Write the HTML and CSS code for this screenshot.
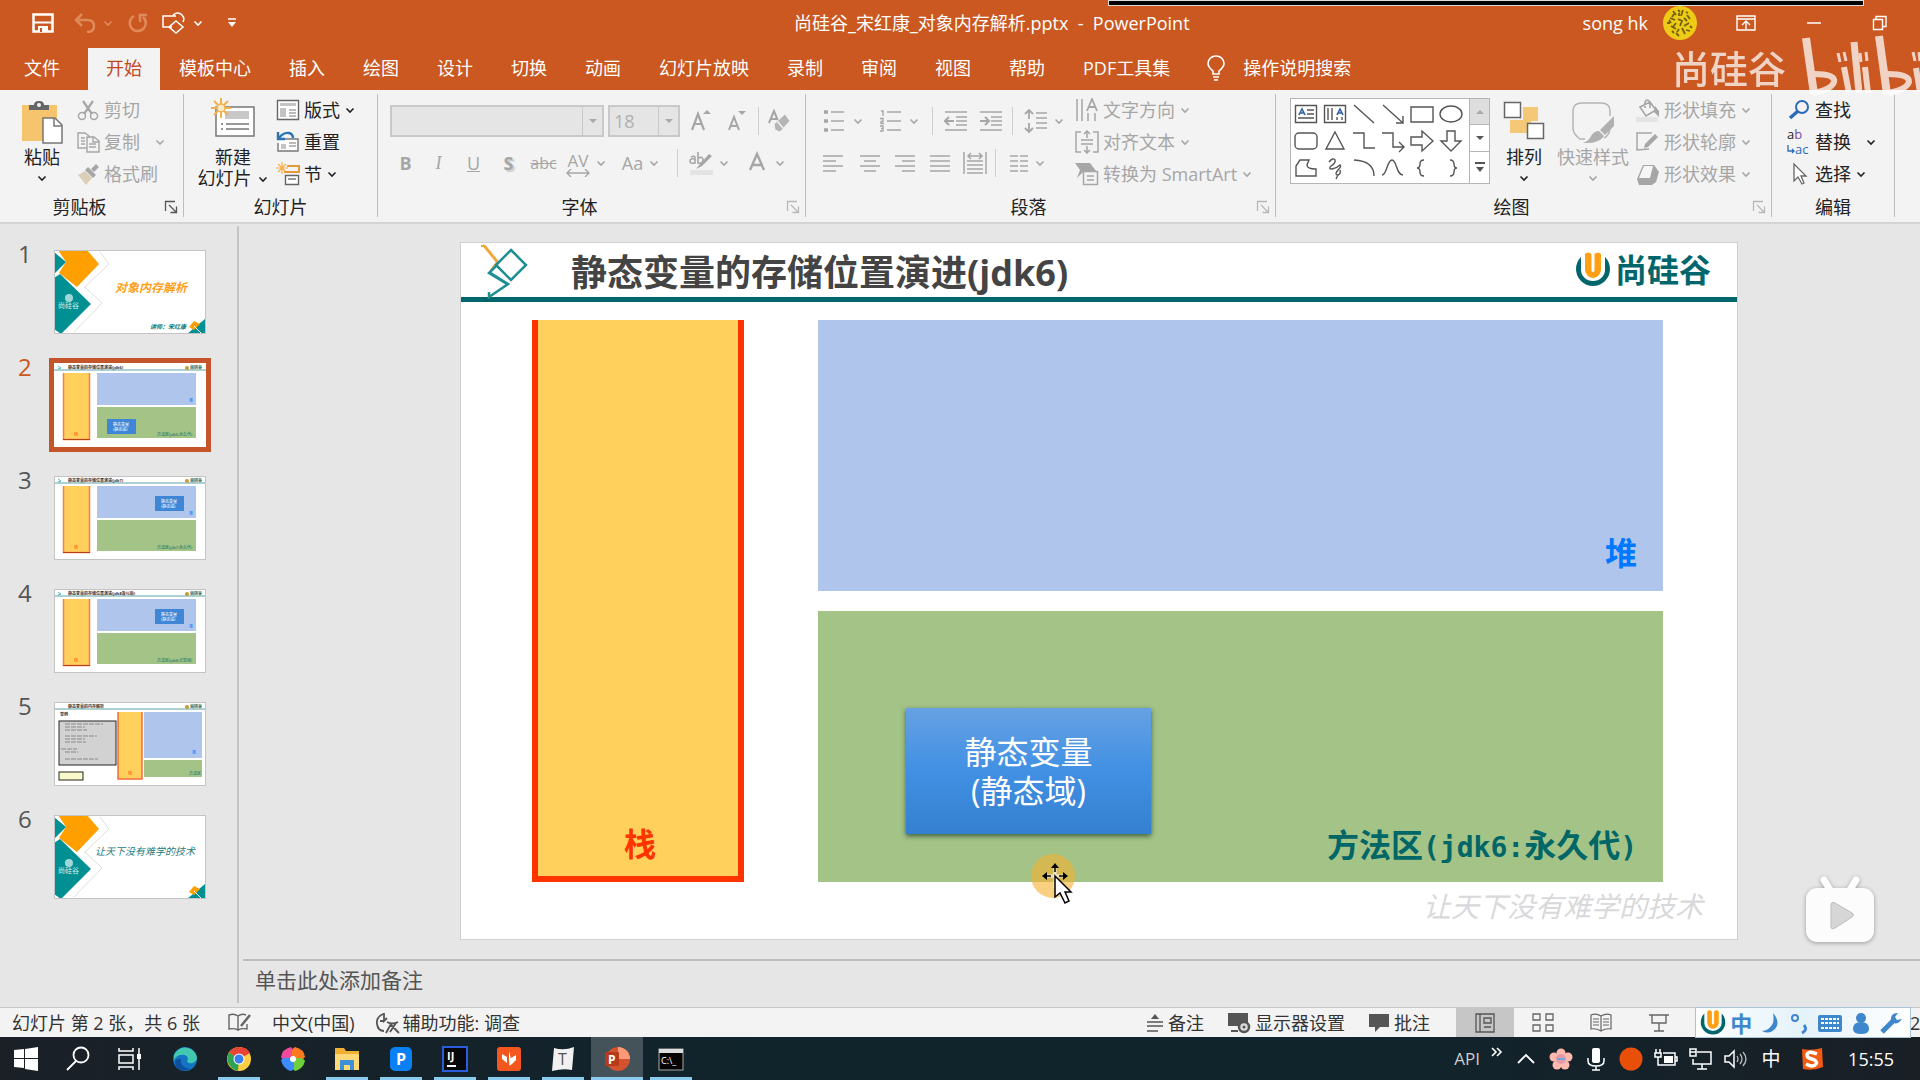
FILE: index.html
```html
<!DOCTYPE html>
<html lang="zh-CN">
<head>
<meta charset="utf-8">
<title>尚硅谷_宋红康_对象内存解析.pptx - PowerPoint</title>
<link rel="stylesheet" href="styles.css">
</head>
<body>
<svg class="sprite" aria-hidden="true">
  <symbol id="chev" viewBox="0 0 12 12"><path d="M2.500 4.500 6 8 9.500 4.500" fill="none" stroke="currentColor" stroke-width="1.600"/></symbol>
  <symbol id="launch" viewBox="0 0 14 14"><path d="M1.500 11V1.500H11M5 5l7 7M12.500 6.500v6h-6" fill="none" stroke="currentColor" stroke-width="1.300"/></symbol>
  <symbol id="u-logo" viewBox="0 0 36 36"><path d="M6 5A17 17 0 1 0 30 5v13a12 11 0 0 1-24 0z" fill="#00666b"/><path d="M10 2q3-3 6.500 0v17q1.500 2 3 0V2q3.500-3 6.500 0v16q-1 7-8 8-7-1-8-8z" fill="#ffa014"/></symbol>
  <symbol id="cover" viewBox="0 0 152 84"><rect width="152" height="84" fill="#fff"/><path d="M46 2l9 12-25 24M31 37l17 16-28 29" fill="none" stroke="#e0dfd6"/><path d="M4 0h29l12 14-22 23L5 23l7-11z" fill="#ffa000"/><path d="M0 2l12 10L0 24zM0 28l6-4 31 30L7 84l-7-5z" fill="#008f92"/><circle cx="15" cy="48" r="4" fill="#9fd8da"/><path d="M151 69v15h-18z" fill="#008f92"/><path d="M135 77l5-6 6 3-6 6z" fill="#ffa000"/><path d="M140 76l8 8" stroke="#fff"/></symbol>
  <symbol id="memory" viewBox="0 0 152 84"><rect width="152" height="84" fill="#fff"/><path d="M4 3l3 2-3 1" fill="none" stroke="#5bb"/><path d="M0 7h152" stroke="#5aa3a5"/><circle cx="133" cy="5" r="2" fill="#c59a39"/><text x="136" y="6" font-size="4" font-weight="bold" fill="#066">尚硅谷</text><rect x="9" y="10" width="26" height="66" fill="#ffd15c"/><path d="M9.500 10v66.500h26V10" fill="none" stroke="#f97d4a" stroke-width="1.500"/><path d="M9 76.500h27" stroke="#b5421c"/><rect x="43" y="10" width="99" height="32" fill="#afc5ec"/><rect x="43" y="44" width="99" height="31" fill="#a4c387"/></symbol>
</svg>

<div class="app">
  <header class="titlebar">
    <div class="quick">
      <button aria-label="保存"><svg width="22" height="20" viewBox="0 0 22 20"><path d="M1.500 1.500h19v17h-19z" fill="none" stroke="#fff" stroke-width="2.500"/><path d="M2 9.500h18" stroke="#fff" stroke-width="2"/><path d="M6 19v-6h10v6z" fill="#fff"/><path d="M8 15h2v4H8z" fill="#ca5820"/></svg></button>
      <button class="faded" aria-label="撤消"><svg width="22" height="20" viewBox="0 0 22 20"><path d="M8 1 2 7l6 6M2 7h11q7 0 7 6t-7 6" fill="none" stroke="currentColor" stroke-width="2.500"/></svg><svg class="chev"><use href="#chev"/></svg></button>
      <button class="faded" aria-label="重复"><svg width="20" height="20" viewBox="0 0 20 20"><path d="M6 3a8 8 0 1 0 9 1M12 9V2h7" fill="none" stroke="currentColor" stroke-width="2.500"/></svg></button>
      <button aria-label="形状"><svg width="24" height="22" viewBox="0 0 24 22"><path d="M10 15H1V4h13M11 3q5-4 9 0 3 3 1 7M14 9l7 6-7 6-7-6z" fill="none" stroke="#fff" stroke-width="1.500"/></svg><svg class="chev"><use href="#chev"/></svg></button>
      <button aria-label="自定义快速访问工具栏"><svg width="12" height="12" viewBox="0 0 12 12"><path d="M2 2h8" stroke="#fff" stroke-width="1.500"/><path d="M2 5h8L6 10z" fill="#fff"/></svg></button>
    </div>
    <h1 class="doc-title">尚硅谷_宋红康_对象内存解析.pptx &nbsp;- &nbsp;PowerPoint</h1>
    <div class="account">
      <span>song hk</span>
      <svg width="36" height="34" viewBox="0 0 36 34"><circle cx="18" cy="17" r="17" fill="#edcb16"/><path d="M11 5l3 4M21 4l-2 6M25 9l3 4M8 12l5 2M16 13l4 2-2 5M27 17l-5 3M9 20l5 3M20 22l3 6M14 27l3 3M24 24l4 1M5 17h3M17 7v3M14 17l-3 4M12 8l-2 3M22 12l3 3M17 23l-2 3M28 20l2 2M16 4l2 2M10 25l2 2M7 14l2 3M24 6l2 1" stroke="#74600a" stroke-width="1.800" fill="none"/></svg>
    </div>
    <div class="window-buttons">
      <button aria-label="功能区显示选项"><svg width="20" height="16" viewBox="0 0 20 16"><path d="M1 1h18v14H1zM1 4h18M10 14V7M6 10l4-4 4 4" fill="none" stroke="#fff" stroke-width="1.400"/></svg></button>
      <button aria-label="最小化"><svg width="16" height="16" viewBox="0 0 16 16"><path d="M1 8h14" stroke="#fff" stroke-width="1.500"/></svg></button>
      <button aria-label="向下还原"><svg width="16" height="16" viewBox="0 0 16 16"><path d="M1.500 4.500h9v10h-9zM4 4V1.500h10v10h-3" fill="none" stroke="#fff" stroke-width="1.400"/></svg></button>
    </div>
  </header>

  <nav class="tabs">
    <button class="file">文件</button>
    <button class="active">开始</button>
    <button>模板中心</button><button>插入</button><button>绘图</button><button>设计</button><button>切换</button><button>动画</button><button>幻灯片放映</button><button>录制</button><button>审阅</button><button>视图</button><button>帮助</button><button>PDF工具集</button>
    <label class="tell-me"><svg width="20" height="26" viewBox="0 0 20 26"><path d="M7 19v-3Q2 12 2 8.500a8 7.500 0 0 1 16 0Q18 12 13 16v3zM7 22h6M8 25h4" fill="none" stroke="#fff" stroke-width="1.600"/></svg><input type="text" placeholder="操作说明搜索"></label>
  </nav>

  <section class="ribbon">
    <div class="group g-clip">
      <div class="body">
        <button class="big w44"><svg width="44" height="46" viewBox="0 0 44 46"><path d="M2 7h35v36H2z" fill="#f5c46d"/><path d="M9 12V7h5q0-4 5-4t5 4h5v5z" fill="#666"/><circle cx="19" cy="7" r="2" fill="#f3f3f3"/><path d="M23 20h12l7 7v18H23z" fill="#fff" stroke="#777" stroke-width="1.500"/><path d="M34 20v8h8" fill="none" stroke="#777" stroke-width="1.500"/></svg><span>粘贴</span><svg class="chev"><use href="#chev"/></svg></button>
        <div class="stack">
          <button class="off"><svg viewBox="0 0 24 24"><path d="M7 3l9 13M17 3L8 16" fill="none" stroke="currentColor" stroke-width="2.200"/><circle cx="6" cy="18" r="3.500" fill="none" stroke="currentColor" stroke-width="1.500"/><circle cx="18" cy="18" r="3.500" fill="none" stroke="currentColor" stroke-width="1.500"/></svg>剪切</button>
          <button class="off wide"><svg viewBox="0 0 24 24"><path d="M11 18H2V3h7l4 3v2M11 7h7l5 4v11H11zM17 7v5h6M5 8h4M5 11h4M5 14h4M13 14h7M13 17h7" fill="none" stroke="currentColor" stroke-width="1.400"/></svg>复制<svg class="chev"><use href="#chev"/></svg></button>
          <button class="off"><svg viewBox="0 0 24 24"><path d="M2 13l7-4 7 7-6 7z" fill="#dccfb8"/><path d="M9 8l3-3 8 8-3 3zM15 7l5-5 3 3-5 5z" fill="currentColor"/></svg>格式刷</button>
        </div>
      </div>
      <footer><span>剪贴板</span><button aria-label="剪贴板选项"><svg width="14" height="14"><use href="#launch"/></svg></button></footer>
    </div>

    <div class="group g-slides">
      <div class="body">
        <button class="big w70"><svg width="44" height="46" viewBox="0 0 44 46"><path d="M5 9h38v29H5z" fill="#fff" stroke="#777" stroke-width="1.500"/><path d="M14 13h24v8H14z" fill="#c8c8c8"/><path d="M10 26h2M15 26h23M10 31h2M15 31h23" stroke="#777" stroke-width="1.500"/><path d="M10 0v20M0 10h20M3 3l14 14M17 3L3 17" stroke="#f2b14c" stroke-width="2"/><circle cx="10" cy="10" r="4" fill="#fbe9c8" stroke="#f2b14c" stroke-width="1.500"/></svg><span>新建</span><span class="with-chev">幻灯片<svg class="chev"><use href="#chev"/></svg></span></button>
        <div class="stack">
          <button><svg viewBox="0 0 24 24"><path d="M1.500 2.500h21v19h-21z" fill="#fff" stroke="#666" stroke-width="1.400"/><path d="M4 5h16v3H4zM4 10h6v9H4z" fill="#c4c4c4"/><path d="M13 12h7M13 15h7M13 18h7" stroke="#777"/></svg>版式<svg class="chev"><use href="#chev"/></svg></button>
          <button><svg viewBox="0 0 24 24"><path d="M5 9h17v12H2v-8" fill="#fff" stroke="#777" stroke-width="1.400"/><path d="M5 14h5v5H5z" fill="#c4c4c4"/><path d="M13 13h7M13 16h7" stroke="#777"/><path d="M2 2v7h7M2 9q5-7 11-6 4 1 4 5" fill="none" stroke="#2e74b5" stroke-width="2.400"/></svg>重置</button>
          <button><svg viewBox="0 0 24 24"><path d="M6 0v12M0 6h12M2 2l8 8M10 2l-8 8" stroke="#f2b14c" stroke-width="1.200"/><path d="M11 4h12v6H8" fill="none" stroke="#e59a3a" stroke-width="2"/><path d="M9.500 13.500h13v9h-13z" fill="#fff" stroke="#666" stroke-width="1.400"/><path d="M12 17h8" stroke="#999" stroke-width="2"/></svg>节<svg class="chev"><use href="#chev"/></svg></button>
        </div>
      </div>
      <footer><span>幻灯片</span></footer>
    </div>

    <div class="group g-font">
      <div class="body rows off">
        <div class="row font-row">
          <span class="combo name"><select aria-label="字体" disabled><option></option></select><i></i></span>
          <span class="combo size"><select aria-label="字号" disabled><option>18</option></select><i></i></span>
          <button aria-label="增大字号"><svg viewBox="0 0 24 24"><path d="M3 21 9 5l6 16M5 15h8" fill="none" stroke="currentColor" stroke-width="2.200"/><path d="M14 5l4-4 4 4z" fill="currentColor"/></svg></button>
          <button aria-label="减小字号"><svg viewBox="0 0 24 24"><path d="M4 21 9 8l5 13M6 17h6" fill="none" stroke="currentColor" stroke-width="2"/><path d="M13 2l4 4 4-4z" fill="currentColor"/></svg></button>
          <hr>
          <button aria-label="清除所有格式"><svg viewBox="0 0 24 24"><path d="M2 14 7 2l5 12M4 10h7" fill="none" stroke="currentColor" stroke-width="2"/><path d="M7 15 18 5l5 7-10 11-5-2z" fill="#b5b5b5" stroke="#f3f3f3"/><path d="M10 12l6 7" stroke="#f3f3f3" stroke-width="1.500"/></svg></button>
        </div>
        <div class="row style-row">
          <button><b>B</b></button><button><em>I</em></button><button><u>U</u></button><button><b class="shadowed">S</b></button><button><s>abc</s></button>
          <button aria-label="字符间距"><span class="av">AV<svg width="24" height="8" viewBox="0 0 24 8"><path d="M5 0 1 4l4 4M19 0l4 4-4 4M1 4h22" fill="none" stroke="currentColor" stroke-width="1.400"/></svg></span><svg class="chev"><use href="#chev"/></svg></button>
          <button>Aa<svg class="chev"><use href="#chev"/></svg></button>
          <hr>
          <button aria-label="突出显示"><svg viewBox="0 0 24 24"><path d="M1 19h23v5H1z" fill="#e3e3e3"/><path d="M2 6q4-2 4 1v5q-5 1-5-2t5-2M9 1v11q5 1 5-3t-5-2" fill="none" stroke="currentColor" stroke-width="1.600"/><path d="M20 3l3 2-10 10-6 3 4-5z" fill="currentColor"/></svg><svg class="chev"><use href="#chev"/></svg></button>
          <button aria-label="字体颜色"><svg viewBox="0 0 24 24"><path d="M5 19 12 3l7 16M8 14h8" fill="none" stroke="currentColor" stroke-width="2.400"/></svg><svg class="chev"><use href="#chev"/></svg></button>
        </div>
      </div>
      <footer class="off-launch"><span>字体</span><button aria-label="字体选项"><svg width="14" height="14"><use href="#launch"/></svg></button></footer>
    </div>

    <div class="group g-para">
      <div class="body off">
        <div class="rows">
          <div class="row list-row">
            <button aria-label="项目符号"><svg viewBox="0 0 24 24"><path d="M1 3h4M1 12h4M1 21h4" stroke="currentColor" stroke-width="3.500"/><path d="M8 3h13M8 12h13M8 21h13" stroke="currentColor" stroke-width="1.500"/></svg><svg class="chev"><use href="#chev"/></svg></button>
            <button aria-label="编号"><svg viewBox="0 0 24 24"><path d="M2 2h2v5M1 9.500h3v3H2v2h3M1 17h3v5H1M2 19.500h2" fill="none" stroke="currentColor" stroke-width="1.300"/><path d="M8 3h14M8 12h14M8 21h14" stroke="currentColor" stroke-width="1.500"/></svg><svg class="chev"><use href="#chev"/></svg></button>
            <hr>
            <button aria-label="降低列表级别"><svg viewBox="0 0 24 24"><path d="M1 3h22M12 8h11M12 12h11M12 16h11M1 21h22" stroke="currentColor" stroke-width="1.500"/><path d="M10 12H2M5 8l-4 4 4 4" fill="none" stroke="currentColor" stroke-width="2"/></svg></button>
            <button aria-label="提高列表级别"><svg viewBox="0 0 24 24"><path d="M1 3h22M12 8h11M12 12h11M12 16h11M1 21h22" stroke="currentColor" stroke-width="1.500"/><path d="M1 12h8M6 8l4 4-4 4" fill="none" stroke="currentColor" stroke-width="2"/></svg></button>
            <hr>
            <button aria-label="行距"><svg viewBox="0 0 24 24"><path d="M5 1v9M5 14v9M1 5l4-4 4 4M1 19l4 4 4-4" fill="none" stroke="currentColor" stroke-width="1.800"/><path d="M12 4h11M12 9h11M12 14h11M12 19h11" stroke="currentColor" stroke-width="1.500"/></svg><svg class="chev"><use href="#chev"/></svg></button>
          </div>
          <div class="row align-row">
            <button aria-label="左对齐"><svg viewBox="0 0 24 24"><path d="M2 5h20M2 10h13M2 15h20M2 20h13" stroke="currentColor" stroke-width="1.500"/></svg></button>
            <button aria-label="居中"><svg viewBox="0 0 24 24"><path d="M2 5h20M6 10h12M2 15h20M6 20h12" stroke="currentColor" stroke-width="1.500"/></svg></button>
            <button aria-label="右对齐"><svg viewBox="0 0 24 24"><path d="M2 5h20M9 10h13M2 15h20M9 20h13" stroke="currentColor" stroke-width="1.500"/></svg></button>
            <button aria-label="两端对齐"><svg viewBox="0 0 24 24"><path d="M2 5h20M2 10h20M2 15h20M2 20h20" stroke="currentColor" stroke-width="1.500"/></svg></button>
            <button aria-label="分散对齐"><svg viewBox="0 0 24 24"><path d="M1 1v22M23 1v22M4 10h16M4 14h16M4 18h16M4 22h16M5 5h14M8 2 5 5l3 3M16 2l3 3-3 3" fill="none" stroke="currentColor" stroke-width="1.500"/></svg></button>
            <hr>
            <button aria-label="分栏"><svg width="20" height="24" viewBox="0 0 20 24"><path d="M1 5h8M1 10h8M1 15h8M1 20h8M11 5h8M11 10h8M11 15h8M11 20h8" stroke="currentColor" stroke-width="1.500"/></svg><svg class="chev"><use href="#chev"/></svg></button>
          </div>
        </div>
        <div class="stack">
          <button><svg viewBox="0 0 24 24"><path d="M2 1v22M7 1v22M13 15v8M20 15v8" stroke="currentColor" stroke-width="1.500"/><path d="M12 13 17 1l5 12M14 9h6" fill="none" stroke="currentColor" stroke-width="1.800"/></svg>文字方向<svg class="chev"><use href="#chev"/></svg></button>
          <button><svg viewBox="0 0 24 24"><path d="M6 2H1v20h5M18 2h5v20h-5M6 10h12M6 14h12M12 1v7M12 23v-7M9 4l3-3 3 3M9 20l3 3 3-3" fill="none" stroke="currentColor" stroke-width="1.500"/></svg>对齐文本<svg class="chev"><use href="#chev"/></svg></button>
          <button><svg viewBox="0 0 24 24"><path d="M0 1h15l6 8H9l-7 7 3-8z" fill="currentColor"/><path d="M8.500 9.500h14v13h-14z" fill="#f3f3f3" stroke="currentColor" stroke-width="1.500"/><path d="M12 14h7M12 18h7" stroke="currentColor" stroke-width="1.500"/></svg>转换为 SmartArt<svg class="chev"><use href="#chev"/></svg></button>
        </div>
      </div>
      <footer class="off-launch"><span>段落</span><button aria-label="段落选项"><svg width="14" height="14"><use href="#launch"/></svg></button></footer>
    </div>

    <div class="group g-draw">
      <div class="body">
        <div class="gallery">
          <div class="shapes">
            <button aria-label="文本框"><svg viewBox="0 0 24 24"><path d="M1.500 3.500h21v17h-21zM13 8h7M13 12h7M4 16h16"/><path d="M5 13 8 7l3 6M6 11h4" stroke="#2f62a3" stroke-width="1.600"/></svg></button>
            <button aria-label="竖排文本框"><svg viewBox="0 0 24 24"><path d="M1.500 3.500h21v17h-21zM5 6v12M9 6v12M14 15v3M19 15v3"/><path d="M14 13l3-6 3 6M15 11h4" stroke="#2f62a3" stroke-width="1.600"/></svg></button>
            <button aria-label="直线"><svg viewBox="0 0 24 24"><path d="M2 3l20 18"/></svg></button>
            <button aria-label="箭头"><svg viewBox="0 0 24 24"><path d="M2 3l20 18M22 14v7h-7"/></svg></button>
            <button aria-label="矩形"><svg viewBox="0 0 24 24"><path d="M1 5h22v15H1z"/></svg></button>
            <button aria-label="椭圆"><svg viewBox="0 0 24 24"><ellipse cx="12" cy="12" rx="11" ry="8"/></svg></button>
            <button aria-label="圆角矩形"><svg viewBox="0 0 24 24"><rect x="1" y="4" width="22" height="16" rx="4"/></svg></button>
            <button aria-label="三角形"><svg viewBox="0 0 24 24"><path d="M12 3l9 17H3z"/></svg></button>
            <button aria-label="肘形连接符"><svg viewBox="0 0 24 24"><path d="M1 4h11v15h11"/></svg></button>
            <button aria-label="肘形箭头"><svg viewBox="0 0 24 24"><path d="M1 4h11v14h11M18 13l5 5-5 5"/></svg></button>
            <button aria-label="右箭头"><svg viewBox="0 0 24 24"><path d="M1 8h11V2l11 10-11 10v-6H1z"/></svg></button>
            <button aria-label="下箭头"><svg viewBox="0 0 24 24"><path d="M8 2v10H2l10 10 10-10h-6V2z"/></svg></button>
            <button aria-label="任意多边形"><svg viewBox="0 0 24 24"><path d="M2 20V10l4-6h9l-2 5q0 4 9 4v7z"/></svg></button>
            <button aria-label="自由曲线"><svg viewBox="0 0 24 24"><path d="M6 6q4-5 6-2 1 3-4 6-3 3 1 3 5-1 8-4 2 1-2 5-4 5 0 5 3-1 2-5M15 19l-2 4"/></svg></button>
            <button aria-label="弧形"><svg viewBox="0 0 24 24"><path d="M2 4q20 1 20 16"/></svg></button>
            <button aria-label="曲线"><svg viewBox="0 0 24 24"><path d="M1 19C6 19 6 4 11 4s4 15 11 15"/></svg></button>
            <button aria-label="左大括号"><svg viewBox="0 0 24 24"><path d="M14 4q-4 0-4 4 0 4-3 4 3 0 3 4t4 4"/></svg></button>
            <button aria-label="右大括号"><svg viewBox="0 0 24 24"><path d="M11 4q4 0 4 4 0 4 3 4-3 0-3 4t-4 4"/></svg></button>
          </div>
          <div class="scroller">
            <button class="up" aria-label="上一行"><svg width="8" height="6" viewBox="0 0 8 6"><path d="M0 5h8L4 1z" fill="#aaa"/></svg></button>
            <button aria-label="下一行"><svg width="8" height="6" viewBox="0 0 8 6"><path d="M0 1h8L4 5z" fill="#555"/></svg></button>
            <button aria-label="其他"><svg width="10" height="12" viewBox="0 0 10 12"><path d="M0 1h10v2H0zM1 6h8l-4 5z" fill="#555"/></svg></button>
          </div>
        </div>
        <button class="big w44"><svg width="44" height="46" viewBox="0 0 44 46"><path d="M21 9h15v14h-7v12H8V22h13z" fill="#f5c878"/><path d="M2.500 4.500h16v15h-16zM25.500 25.500h16v15h-16z" fill="#fff" stroke="#666" stroke-width="1.500"/></svg><span>排列</span><svg class="chev"><use href="#chev"/></svg></button>
        <button class="big w72 off"><svg width="44" height="46" viewBox="0 0 44 46"><path d="M14 41H9Q2 36 2 30V13Q2 5 11 5h19q9 0 9 8v5M39 29q0 8-6 11" fill="none" stroke="#b5b5b5" stroke-width="1.500"/><path d="M43 18v10l-9 9-5-5zM28 33l5 5q-5 8-21 7 6-2 8-7 3-5 8-5z" fill="#b0b0b0"/></svg><span>快速样式</span><svg class="chev"><use href="#chev"/></svg></button>
        <div class="stack off">
          <button><svg viewBox="0 0 24 24"><path d="M0 19h22v5H0z" fill="#e4e4e4"/><path d="M9 10V4q2-4 5 0v6M4 9l10-5 6 8-10 6z" fill="none" stroke="currentColor" stroke-width="1.600"/><path d="M19 8l4 5v6l-5-5z" fill="currentColor"/></svg>形状填充<svg class="chev"><use href="#chev"/></svg></button>
          <button><svg viewBox="0 0 24 24"><path d="M16 3H1v17l12-1" fill="none" stroke="currentColor" stroke-width="1.500"/><path d="M19 4l3 3L12 17l-4 1 1-4z" fill="currentColor"/></svg>形状轮廓<svg class="chev"><use href="#chev"/></svg></button>
          <button><svg viewBox="0 0 24 24"><path d="M7 3h11l5 7-3 10-4 3H3L1 17z" fill="currentColor"/><path d="M8 4h9l-3 12H3z" fill="#f6f6f6"/></svg>形状效果<svg class="chev"><use href="#chev"/></svg></button>
        </div>
      </div>
      <footer class="off-launch"><span>绘图</span><button aria-label="绘图选项"><svg width="14" height="14"><use href="#launch"/></svg></button></footer>
    </div>

    <div class="group g-edit">
      <div class="body">
        <div class="stack">
          <button><svg viewBox="0 0 24 24"><circle cx="15" cy="9" r="6" fill="none" stroke="#2b6cb8" stroke-width="2"/><path d="M11 13l-8 7" stroke="#2b6cb8" stroke-width="3.500"/></svg>查找</button>
          <button class="wide"><span class="swap"><span>a<i>b</i></span><span><svg width="8" height="10" viewBox="0 0 8 10"><path d="M1 0v6h6M5 4l2 2-2 2" fill="none" stroke="#2b6cb8" stroke-width="1.300"/></svg><i>ac</i></span></span>替换<svg class="chev"><use href="#chev"/></svg></button>
          <button><svg viewBox="0 0 24 24"><path d="M7 2v17l4-4 4 7 2-1-3-7h5z" fill="#fff" stroke="#666" stroke-width="1.300"/></svg>选择<svg class="chev"><use href="#chev"/></svg></button>
        </div>
      </div>
      <footer><span>编辑</span></footer>
    </div>
  </section>

  <main class="workspace">
    <ol class="thumbs">
      <li><span>1</span><svg viewBox="0 0 152 84"><use href="#cover"/><text x="61" y="42" font-size="12" font-weight="bold" font-style="italic" fill="#ff9f1a">对象内存解析</text><text x="4" y="58" font-size="7" fill="#d6f0f0">尚硅谷</text><text x="96" y="79" font-size="6" font-weight="bold" font-style="italic" fill="#00797c">讲师：宋红康</text></svg></li>
      <li class="current"><span>2</span><svg viewBox="0 0 152 84"><use href="#memory"/><text x="14" y="6" font-size="4" font-weight="bold" fill="#333">静态变量的存储位置演进(jdk6)</text><rect x="53" y="56" width="29" height="15" fill="#3f86d6"/><text x="59" y="63" font-size="4" fill="#fff">静态变量</text><text x="59" y="68" font-size="4" fill="#fff">(静态域)</text><text x="20" y="73" font-size="4" fill="#f30">栈</text><text x="135" y="39" font-size="4" fill="#07f">堆</text><text x="103" y="73" font-size="4" fill="#066">方法区(jdk6:永久代)</text></svg></li>
      <li><span>3</span><svg viewBox="0 0 152 84"><use href="#memory"/><text x="14" y="6" font-size="4" font-weight="bold" fill="#333">静态变量的存储位置演进(jdk7)</text><rect x="101" y="20" width="29" height="15" fill="#3f86d6"/><text x="107" y="27" font-size="4" fill="#fff">静态变量</text><text x="107" y="32" font-size="4" fill="#fff">(静态域)</text><text x="20" y="73" font-size="4" fill="#f30">栈</text><text x="135" y="39" font-size="4" fill="#07f">堆</text><text x="103" y="73" font-size="4" fill="#066">方法区(jdk7:永久代)</text></svg></li>
      <li><span>4</span><svg viewBox="0 0 152 84"><use href="#memory"/><text x="14" y="6" font-size="4" font-weight="bold" fill="#333">静态变量的存储位置演进(jdk8及以后)</text><rect x="101" y="20" width="29" height="15" fill="#3f86d6"/><text x="107" y="27" font-size="4" fill="#fff">静态变量</text><text x="107" y="32" font-size="4" fill="#fff">(静态域)</text><text x="20" y="73" font-size="4" fill="#f30">栈</text><text x="135" y="39" font-size="4" fill="#07f">堆</text><text x="103" y="73" font-size="4" fill="#066">方法区(jdk8:元空间)</text></svg></li>
      <li><span>5</span><svg viewBox="0 0 152 84"><rect width="152" height="84" fill="#fff"/><path d="M0 7h152" stroke="#5aa3a5"/><text x="14" y="6" font-size="4" font-weight="bold" fill="#333">静态变量的内存解析</text><circle cx="133" cy="5" r="2" fill="#c59a39"/><text x="136" y="6" font-size="4" font-weight="bold" fill="#066">尚硅谷</text><text x="6" y="14" font-size="4" font-weight="bold" fill="#333">举例</text><rect x="5" y="19" width="57" height="44" fill="#d2d2d2" stroke="#222"/><path d="M11 22h38M11 25h20M11 28h22M11 34h32M11 37h20M11 40h21M7 47h16M11 50h13M11 57h33" stroke="#888" stroke-dasharray="5 1"/><rect x="5" y="70" width="24" height="8" fill="#f7f7ca" stroke="#222"/><rect x="64" y="10" width="24" height="67" fill="#ffd15c"/><path d="M64 10v67h24V10" fill="none" stroke="#f9693a" stroke-width="1.500"/><path d="M90 10h58v46H90z" fill="#afc5ec"/><path d="M90 58h58v17H90z" fill="#a4c387"/><text x="74" y="73" font-size="4" fill="#f30">栈</text><text x="138" y="52" font-size="4" fill="#07f">堆</text><text x="135" y="73" font-size="4" fill="#066">方法区</text></svg></li>
      <li><span>6</span><svg viewBox="0 0 152 84"><use href="#cover"/><text x="4" y="58" font-size="7" fill="#d6f0f0">尚硅谷</text><text x="41" y="40" font-size="10" font-style="italic" fill="#267b7d">让天下没有难学的技术</text></svg></li>
    </ol>

    <div class="editor">
      <div class="stage">
        <article class="slide">
          <header class="slide-head">
            <svg class="emblem" width="50" height="57" viewBox="0 0 50 57"><path d="M2 4h4L19 20M4 3l14 17-6 8" fill="none" stroke="#f0a63a" stroke-width="2"/><path d="M32 8 47 23 32 38 17 23zM17 24l-7 7 18 11M10 30l19 12L10 55v-5" fill="none" stroke="#1f8f93" stroke-width="2.500"/></svg>
            <h2>静态变量的存储位置演进(jdk6)</h2>
            <div class="brand"><svg width="36" height="36"><use href="#u-logo"/></svg>尚硅谷</div>
          </header>
          <div class="diagram">
            <div class="stack-area">栈</div>
            <div class="heap">堆</div>
            <div class="method-area">
              <div class="static-box">静态变量<br>(静态域)</div>
              <p>方法区<span>(jdk6:</span>永久代<span>)</span></p>
            </div>
          </div>
          <p class="motto">让天下没有难学的技术</p>
          <svg class="pointer" width="52" height="60" viewBox="0 0 52 60"><circle cx="25" cy="27" r="22" fill="#f5b02f" opacity=".6"/><path d="M27 15v24M15 27h24" stroke="#fff" stroke-width="3" opacity=".7"/><path d="M27 14l4 5h-8zM14 27l5-4v8zM40 27l-5-4v8z" fill="#000"/><path d="M27 18v5M18 27h5M36 27h-5" stroke="#000" stroke-width="1.500"/><path d="M27 27v21l5-4 5 10 4-2-4-9h6z" fill="#fff" stroke="#000" stroke-width="1.500"/></svg>
        </article>
      </div>
      <textarea class="notes" rows="1" aria-label="备注" placeholder="单击此处添加备注"></textarea>
    </div>
  </main>

  <footer class="status">
    <span>幻灯片 第 2 张，共 6 张</span>
    <button class="proof" aria-label="拼写检查"><svg width="24" height="20" viewBox="0 0 24 20"><path d="M10 17V3Q6 0 1 2v14q5-1 9 1 4-2 9-1v-5M10 3q4-3 8-1" fill="none" stroke="#666" stroke-width="1.400"/><path d="M22 2l-9 11" stroke="#666" stroke-width="2.500"/></svg></button>
    <button class="lang">中文(中国)</button>
    <button class="access"><svg width="26" height="22" viewBox="0 0 26 22"><path d="M8 2Q1 5 2 12t7 7M9 1v8l3-3M9 9H5M12 10q5 3 11 0M16 12l-5 9M16 13l8 8M21 11l-6 9" fill="none" stroke="#555" stroke-width="1.800"/></svg>辅助功能: 调查</button>
    <div class="status-right">
      <button><svg width="18" height="18" viewBox="0 0 18 18"><path d="M9 0l4 5H5z" fill="#555"/><path d="M1 8h16M1 12h16M1 17h11" stroke="#555" stroke-width="1.500"/></svg>备注</button>
      <button><svg width="24" height="22" viewBox="0 0 24 22"><path d="M1 1h20v13H1zM4 18h7v2H4z" fill="#555"/><circle cx="17" cy="15" r="5" fill="#ddd" stroke="#555" stroke-width="2.500"/><circle cx="17" cy="15" r="1.500" fill="#555"/></svg>显示器设置</button>
      <button><svg width="22" height="20" viewBox="0 0 22 20"><path d="M1 1h20v13H12l-5 5v-5H1z" fill="#555"/></svg>批注</button>
    </div>
    <div class="views">
      <button class="on" aria-label="普通视图"><svg width="20" height="20" viewBox="0 0 20 20"><path d="M1 1h18v18H1zM5 1v18M9 5h7v5H9zM9 14h7" fill="none" stroke="#555" stroke-width="1.300"/></svg></button>
      <button aria-label="幻灯片浏览"><svg width="22" height="20" viewBox="0 0 22 20"><path d="M1 1h7v6H1zM14 1h7v6h-7zM1 12h7v6H1zM14 12h7v6h-7z" fill="none" stroke="#666" stroke-width="1.300"/></svg></button>
      <button aria-label="阅读视图"><svg width="22" height="20" viewBox="0 0 22 20"><path d="M11 3v15M11 3Q6 0 1 2v14q5-1 10 2 5-3 10-2V2q-5-2-10 1M3 6h6M3 9h6M3 12h6M13 6h6M13 9h6M13 12h6" fill="none" stroke="#666" stroke-width="1.200"/></svg></button>
      <button aria-label="幻灯片放映"><svg width="20" height="20" viewBox="0 0 20 20"><path d="M0 2h20M3 2v8h14V2M10 10v8M5 18h10" fill="none" stroke="#666" stroke-width="1.400"/></svg></button>
    </div>
    <button class="zoom-level">29</button>
  </footer>

  <footer class="taskbar">
    <div class="launchers">
      <button aria-label="开始菜单"><svg viewBox="0 0 26 26"><path d="M1 4l10-1v9H1zM12 3l13-2v11H12zM1 13h10v9L1 21zM12 13h13v12l-13-2z" fill="#fff"/></svg></button>
      <button aria-label="搜索"><svg viewBox="0 0 26 26"><circle cx="16" cy="9" r="7.500" fill="none" stroke="#fff" stroke-width="1.800"/><path d="M11 15 2 24" stroke="#fff" stroke-width="1.800"/></svg></button>
      <button aria-label="任务视图"><svg viewBox="0 0 26 26"><path d="M2 2v3h14V2M2 24v-3h14v3M2 9h14v8H2zM22 2v22" fill="none" stroke="#fff" stroke-width="1.500"/><path d="M20 8h4v5h-4z" fill="#fff"/></svg></button>
    </div>
    <div class="apps">
      <button aria-label="Edge"><svg viewBox="0 0 26 26"><circle cx="13" cy="13" r="12" fill="#1474c4"/><path d="M2 9Q8-2 19 3q6 4 6 10-2 5-8 4-3-1-1-4-1-5-7-4-4 0-7 5z" fill="#42c7b0"/><path d="M9 13q-2 8 9 10-9 4-14-3-3-8 5-7z" fill="#0c4f9e"/></svg></button>
      <button class="run" aria-label="Chrome"><svg viewBox="0 0 26 26"><circle cx="13" cy="13" r="12" fill="#ffce43"/><path d="M13 13 3 6.500Q7 1 13 1q8 0 11 6z" fill="#e64436"/><path d="M13 13 3 6.500Q-1 13 4 20q3 4 8 5z" fill="#2fa352"/><circle cx="13" cy="13" r="5.500" fill="#fff"/><circle cx="13" cy="13" r="4.500" fill="#3a7ef0"/></svg></button>
      <button aria-label="浏览器"><svg viewBox="0 0 26 26"><path d="M13 13Q3 16 1 11q1-8 10-10 4 3 2 12z" fill="#f04a9a"/><path d="M13 13Q10 3 15 1q9 2 10 10-3 5-12 2z" fill="#ff7a1c"/><path d="M13 13q10-3 12 2-2 8-10 10-5-3-2-12z" fill="#6ed03c"/><path d="M13 13q3 10-2 12-8-2-10-11 3-4 12-1z" fill="#3d8cff"/><circle cx="13" cy="13" r="3" fill="#fff"/></svg></button>
      <button class="run" aria-label="文件资源管理器"><svg viewBox="0 0 26 26"><path d="M1 2h9l2 3h13v19H1z" fill="#f0b132"/><path d="M1 8h24v16H1z" fill="#ffd977"/><path d="M6 24V14h14v10h-4v-5h-6v5z" fill="#3d8fd6"/></svg></button>
      <button class="run" aria-label="P"><svg viewBox="0 0 26 26"><rect x="2" y="1" width="22" height="24" rx="5" fill="#0a80f5"/><text x="8" y="19" font-size="16" font-weight="bold" fill="#fff">P</text></svg></button>
      <button class="run" aria-label="IntelliJ IDEA"><svg viewBox="0 0 26 26"><rect x="1" y="1" width="24" height="24" fill="#08080c" stroke="#2b5ddb" stroke-width="2"/><text x="5" y="14" font-size="11" font-weight="bold" fill="#fff">IJ</text><path d="M5 20h9" stroke="#fff" stroke-width="2"/></svg></button>
      <button class="run" aria-label="Xmind"><svg viewBox="0 0 26 26"><rect x="1" y="1" width="24" height="24" rx="3" fill="#f4571d"/><path d="M6 8l5 3v6l-5-4zM13 5l2 8-2 5v-6zM15 12l5-3v5l-4 4-3 2z" fill="#fff"/></svg></button>
      <button class="run" aria-label="Typora"><svg viewBox="0 0 26 26"><path d="M4 2q10 3 20-1l-2 23q-9-2-20 1z" fill="#f1f1f1"/><text x="8" y="19" font-size="16" fill="#555">T</text></svg></button>
      <button class="run here" aria-label="PowerPoint"><svg viewBox="0 0 26 26"><circle cx="14" cy="13" r="12" fill="#d35230"/><path d="M14 1a12 12 0 0 1 12 12H14z" fill="#ff9a76"/><rect x="1" y="6" width="14" height="14" rx="1" fill="#b9391b"/><text x="4" y="18" font-size="12" font-weight="bold" fill="#fff">P</text></svg></button>
      <button class="run" aria-label="命令提示符"><svg viewBox="0 0 26 26"><rect x="1" y="3" width="24" height="21" fill="#050505" stroke="#aaa"/><path d="M1 3h24v4H1z" fill="#ddd"/><text x="3" y="18" font-size="9" fill="#fff">C:\_</text></svg></button>
    </div>
    <div class="tray">
      <span class="api">API</span>
      <button aria-label="更多"><svg width="12" height="30" viewBox="0 0 12 30"><path d="M1 4l4 4-4 4M6 4l4 4-4 4" fill="none" stroke="#fff" stroke-width="1.600"/></svg></button>
      <button aria-label="显示隐藏的图标"><svg viewBox="0 0 24 24"><path d="M4 16l8-8 8 8" fill="none" stroke="#fff" stroke-width="1.800"/></svg></button>
      <button aria-label="花"><svg viewBox="0 0 24 24"><g fill="#ffb9ae"><circle cx="12" cy="6" r="4.500"/><circle cx="5" cy="10" r="4.500"/><circle cx="19" cy="10" r="4.500"/><circle cx="8" cy="18" r="4.500"/><circle cx="16" cy="18" r="4.500"/></g><circle cx="12" cy="12" r="5" fill="#e69aa8"/><path d="M8 12h8" stroke="#76a8e0" stroke-width="2"/></svg></button>
      <button aria-label="麦克风"><svg viewBox="0 0 24 24"><rect x="8" y="1" width="8" height="15" rx="2" fill="#fff"/><path d="M4 11v3q0 5 8 5t8-5v-3M12 19v4M8 23h8" fill="none" stroke="#fff" stroke-width="1.500"/></svg></button>
      <button aria-label="录制中"><svg viewBox="0 0 24 24"><circle cx="12" cy="12" r="11.500" fill="#e8500a"/></svg></button>
      <button aria-label="电源"><svg viewBox="0 0 24 24"><path d="M9 6h12v12H7M21 10h2v4h-2M2 2v4M6 2v4M1 6h6v4H1zM4 10v8h4" fill="none" stroke="#fff" stroke-width="1.500"/><path d="M10 9h9v7h-9z" fill="#fff"/></svg></button>
      <button aria-label="网络"><svg viewBox="0 0 24 24"><path d="M8 5h14v12H4v-5M13 17v5M8 22h10M1 2h6v7H1zM1 5h6" fill="none" stroke="#fff" stroke-width="1.500"/></svg></button>
      <button aria-label="音量"><svg viewBox="0 0 24 24"><path d="M1 9h4l5-5v16l-5-5H1z" fill="none" stroke="#fff" stroke-width="1.500"/><path d="M13 9q2 3 0 6M16 7q4 5 0 10M19 5q6 7 0 14" fill="none" stroke="#bbb" stroke-width="1.300"/></svg></button>
      <button class="ime">中</button>
      <button aria-label="搜狗输入法"><svg viewBox="0 0 24 24"><path d="M2 2q10 2 20-1l1 19q-9 4-20 2z" fill="#f35a14"/><path d="M17 7q-9-4-10 1 0 3 5 4 6 2 4 5-3 4-10 0" fill="none" stroke="#fff" stroke-width="3.500"/></svg></button>
      <time>15:55</time>
    </div>
  </footer>

  <div class="share-strip"></div>
  <div class="watermark"><span>尚硅谷</span>
    <svg role="img" aria-label="bilibili" width="120" height="64" viewBox="0 0 120 64"><g fill="none" stroke="#fff"><path d="M6 6l8 56" stroke-width="8"/><path d="M14 42q22 0 20 8-2 7-20 11" stroke-width="6"/><path d="M44 35l5 26M65 35l3 26" stroke-width="6"/><path d="M54 10l5 51" stroke-width="7"/><path d="M38 21l2 9M44 20l2 9M60 21l1 9M66 20l1 9" stroke-width="3"/><path d="M79 4l8 58" stroke-width="8"/><path d="M87 42q23 0 22 8-2 7-20 11" stroke-width="6"/><path d="M116 36l4 24" stroke-width="6"/><path d="M113 20l2 9M119 20l1 9" stroke-width="3"/></g></svg>
  </div>
  <svg class="tv" width="76" height="76" viewBox="0 0 76 76"><path d="M22 8l8 13M54 8l-8 13" stroke="#fff" stroke-width="7" stroke-linecap="round"/><rect x="4" y="16" width="68" height="54" rx="11" fill="#fcfcfc"/><path d="M29 32q1-3 4-1l17 10q3 2 0 4L33 56q-4 2-4-1z" fill="#d6d6d6" stroke="#bbb"/></svg>
  <div class="ime-bar">
    <svg viewBox="0 0 26 26"><use href="#u-logo"/></svg><b>中</b>
    <svg viewBox="0 0 26 26"><path d="M16 3q8 9 2 16-6 6-13 2 8-1 11-8 1-5 0-10z" fill="#3f87cc"/></svg>
    <svg viewBox="0 0 26 26"><circle cx="8" cy="8" r="3" fill="none" stroke="#3f87cc" stroke-width="2"/><path d="M17 15q4 5-2 8" fill="none" stroke="#3f87cc" stroke-width="3"/></svg>
    <svg viewBox="0 0 26 26"><rect x="1" y="5" width="24" height="17" rx="2" fill="#3f87cc"/><path d="M4 9h18M4 13h18M4 18h18" stroke="#fff" stroke-width="1.800" stroke-dasharray="3 1"/></svg>
    <svg viewBox="0 0 26 26"><circle cx="13" cy="8" r="5" fill="#3f87cc"/><path d="M13 12q8 0 8 7 0 5-8 5t-8-5q0-7 8-7" fill="#3f87cc"/></svg>
    <svg viewBox="0 0 26 26"><path d="M4 22 16 10" stroke="#3f87cc" stroke-width="5"/><path d="M20 3q-8 0-7 8 5 6 11-2l-5 1-2-3z" fill="#3f87cc"/></svg>
  </div>
</div>
</body>
</html>
```
FILE: styles.css
```css
* { box-sizing: border-box; }
body { margin: 0; font: 18px/22px "Open Sans", "Noto Sans CJK SC", sans-serif; color: #222; }
h1, h2, p, ol { margin: 0; padding: 0; font-weight: 400; }
button, input, select, textarea { font: inherit; color: inherit; background: none; border: 0; padding: 0; margin: 0; }
button { display: flex; align-items: center; justify-content: center; white-space: nowrap; }
svg { display: block; flex: none; }
i { font-style: normal; }
.sprite { position: absolute; width: 0; height: 0; }
.chev { width: 12px; height: 12px; }
.app { position: relative; display: flex; flex-direction: column; min-height: 100vh; overflow: hidden; background: #e6e6e6; }

/* title bar */
.titlebar { display: grid; grid-template-columns: 762px 1fr auto auto; align-items: center; height: 48px; padding: 0 32px 2px; background: #ca5820; color: #fff; }
.quick { display: flex; align-items: center; gap: 14px; }
.quick button { gap: 6px; }
.quick button:first-child { margin-right: 6px; }
.quick button:last-child { margin-left: 8px; }
.quick .faded { color: #e08a5c; }
.doc-title { font-size: 18px; line-height: 22px; white-space: nowrap; }
.account { display: flex; align-items: center; gap: 14px; padding-right: 38px; }
.window-buttons { display: flex; gap: 50px; }

/* tabs */
.tabs { display: flex; height: 42px; background: #ca5820; color: #fff; }
.tabs button { padding: 0 19px 2px; }
.tabs .file { padding: 0 28px 2px 24px; }
.tabs .active { padding: 0 18px 2px; background: #f3f3f3; color: #c2481c; }
.tell-me { display: flex; align-items: center; gap: 17px; margin-left: 17px; padding-bottom: 2px; }
.tell-me input { width: 130px; height: 22px; }
.tell-me input::placeholder { color: #fff; opacity: 1; }

/* ribbon */
.ribbon { display: flex; padding: 4px 0 5px; background: #f3f3f3; border-bottom: 2px solid #d4d4d4; }
.group { display: flex; flex-direction: column; flex: none; border-right: 1px solid #bdbdbd; }
.g-clip { width: 184px; padding-left: 20px; }
.g-slides { width: 194px; padding-left: 14px; }
.g-font { width: 428px; padding-left: 12px; }
.g-para { width: 470px; padding-left: 8px; }
.g-draw { width: 496px; padding-left: 14px; }
.g-edit { width: 123px; padding-left: 15px; }
.group > .body { display: flex; align-items: flex-start; height: 103px; }
.group > footer { display: flex; align-items: center; height: 20px; line-height: 20px; }
.group > footer span { flex: 1; text-align: center; }
.group > footer button { width: 24px; color: #555; }
.group > footer.off-launch button { color: #b8b8b8; }
.g-clip > footer { margin-left: -20px; }
.g-slides > footer { margin-left: -14px; }
.g-font > footer { margin-left: -12px; }
.g-para > footer { margin-left: -8px; }
.g-draw > footer { margin-left: -14px; }
.g-edit > footer { margin-left: -15px; }
.off { color: #a6a6a6; }
.big { flex-direction: column; justify-content: flex-start; padding-top: 4px; line-height: 21px; }
.big > svg:first-child { margin-bottom: 3px; }
.big > .chev { margin-top: 4px; }
.with-chev { display: flex; align-items: center; gap: 5px; }
.w44 { width: 44px; }
.w70 { width: 70px; }
.w72 { width: 72px; }
.stack { display: flex; flex-direction: column; }
.stack button { height: 32px; gap: 4px; justify-content: flex-start; }
.stack button > svg:first-child { width: 24px; height: 24px; }
.stack .wide .chev { margin-left: 10px; }
.g-clip .body { gap: 12px; }
.g-slides .body { gap: 8px; }
.g-para .body { gap: 3px; }
.group > .body.rows, .rows { display: flex; flex-direction: column; gap: 10px; padding-top: 11px; }
.row { display: grid; height: 32px; align-items: center; }
.row button { gap: 5px; height: 32px; }
.row button > svg:not(.chev):not([width]) { width: 24px; height: 24px; }
.row hr { width: 1px; height: 28px; margin: 0 auto; border: 0; background: #cfcfcf; }
.font-row { grid-template-columns: 218px 75px 36px 36px 6px 36px; }
.style-row { grid-template-columns: 31px repeat(4, 35px) 51px 58px 14px 50px 62px; }
.list-row { grid-template-columns: 58px 54px 12px 35px 35px 8px 56px; }
.align-row { grid-template-columns: 38px repeat(4, 35px) 6px 58px; }
.style-row em { font-family: "Liberation Serif", serif; }
.style-row s { font-size: 16px; }
.shadowed { text-shadow: 2px 2px 1px #ccc; }
.av { font-size: 17px; line-height: 16px; padding-top: 4px; }
.combo { display: flex; height: 32px; border: 2px solid #c9c9c9; background: #e5e5e5; }
.combo select { flex: 1; min-width: 0; padding-left: 4px; appearance: none; opacity: 1; color: #b0b0b0; }
.combo i { display: flex; align-items: center; justify-content: center; width: 20px; border-left: 1px solid #c9c9c9; }
.combo i::before { content: ""; border: 4px solid transparent; border-top-color: #a8a8a8; border-bottom: 0; }
.combo.name { width: 214px; }
.combo.size { width: 72px; }
.gallery { display: flex; width: 200px; height: 86px; margin-top: 4px; border: 1px solid #b5b5b5; background: #fff; }
.shapes { display: grid; flex: 1; grid-template-columns: repeat(6, 1fr); align-items: center; padding: 1px 3px 1px 0; }
.shapes svg { width: 24px; height: 24px; fill: none; stroke: #555; stroke-width: 1.4px; }
.scroller { display: grid; width: 20px; border-left: 1px solid #b5b5b5; }
.scroller button + button { border-top: 1px solid #b5b5b5; }
.scroller .up { background: #dedede; }
.g-draw .gallery { margin-right: 12px; }
.g-draw .w72 { margin: 0 7px 0 11px; }
.swap { display: flex; flex-direction: column; width: 24px; font-size: 13px; line-height: 15px; }
.swap > span { display: flex; align-items: center; }
.swap i { color: #7548a8; }
.swap > span + span i { color: #2b6cb8; }

/* workspace */
.workspace { display: flex; flex: 1; border-bottom: 1px solid #c8c8c8; }
.thumbs { display: flex; flex-direction: column; gap: 29px; width: 239px; margin: 2px 0 4px; padding: 24px 0 0 18px; border-right: 2px solid #c4c4c4; list-style: none; }
.thumbs li { display: flex; gap: 22px; }
.thumbs span { width: 14px; font-size: 24px; line-height: 8px; color: #555; }
.thumbs svg { width: 152px; height: 84px; outline: 1px solid #c4c4c4; outline-offset: -1px; }
.thumbs .current span { color: #ca5820; }
.thumbs .current svg { outline: 5px solid #c4552a; outline-offset: 0; }
.editor { display: flex; flex: 1; flex-direction: column; }
.stage { flex: 1; padding: 18px 182px 19px 221px; }
.slide { position: relative; height: 698px; border: 1px solid #cfcfcf; background: #fff; }
.slide-head { display: flex; align-items: center; height: 59px; padding: 0 26px 0 18px; border-bottom: 5px solid #00666b; }
.slide-head h2 { flex: 1; padding: 6px 0 0 42px; font-size: 36px; line-height: 48px; font-weight: 700; color: #444; }
.brand { display: flex; align-items: center; gap: 4px; font-size: 32px; line-height: 36px; font-weight: 700; color: #00666b; }
.diagram { display: grid; grid-template: 271px 271px / 212px 1fr; gap: 20px 74px; padding: 18px 74px 0 71px; font-size: 32px; font-weight: 700; line-height: 40px; }
.stack-area { display: flex; grid-row: 1 / 3; align-items: flex-end; justify-content: center; padding: 0 0 12px 4px; border: 6px solid #ff3300; border-top: 0; background: #ffd15c; color: #ff3300; }
.heap { display: flex; align-items: flex-end; justify-content: flex-end; padding: 0 26px 18px; background: #afc5ec; color: #0078ff; }
.method-area { position: relative; display: flex; align-items: flex-end; justify-content: flex-end; padding: 0 26px 14px; background: #a4c387; color: #006666; }
.method-area p { font-weight: 700; }
.method-area span { font-family: "DejaVu Sans Mono", monospace; font-size: 28px; }
.static-box { position: absolute; left: 88px; top: 97px; width: 245px; height: 126px; padding-top: 24px; background: linear-gradient(#66a1e3, #4190e3 50%, #3580d0); box-shadow: 0 2px 5px #3b5a3a; color: #fff; font-weight: 400; line-height: 39px; text-align: center; }
.motto { padding: 8px 34px 0 0; color: #d9d9db; font-size: 28px; line-height: 32px; font-style: italic; text-align: right; }
.pointer { position: absolute; left: 567px; top: 606px; }
.notes { display: block; height: 48px; margin-left: 4px; padding: 6px 12px; border-top: 2px solid #bdbdbd; font-size: 21px; line-height: 26px; resize: none; overflow: hidden; }
.notes::placeholder { color: #555; opacity: 1; }

/* status bar */
.status { display: flex; align-items: center; height: 29px; padding-left: 12px; overflow: hidden; background: #f3f3f3; color: #333; white-space: nowrap; }
.proof { margin: 0 20px 0 28px; }
.lang { margin-right: 20px; }
.access { gap: 2px; }
.status-right { display: flex; gap: 23px; margin-left: auto; margin-right: 26px; }
.status-right button { gap: 4px; }
.views { display: flex; align-self: stretch; }
.views button { width: 58px; }
.views .on { background: #c6c6c6; }
.zoom-level { flex: none; width: 232px; padding-left: 222px; justify-content: flex-start; }

/* taskbar */
.taskbar { display: flex; justify-content: space-between; height: 44px; background: linear-gradient(90deg, #1b2027, #10242c 40%, #10242c 70%, #1a1f26); color: #fff; }
.launchers, .apps { display: flex; }
.apps { gap: 2px; margin: 0 auto 0 3px; }
.taskbar svg { overflow: hidden; }
.launchers button, .apps button { width: 52px; height: 44px; }
.launchers svg, .apps svg { width: 26px; height: 26px; }
.apps .run { background: linear-gradient(#8ccbf0, #8ccbf0) center bottom / 42px 4px no-repeat; }
.apps .here { background-color: #445259; background-size: 52px 4px; }
.tray { display: flex; align-items: center; gap: 11px; padding-right: 26px; }
.tray button > svg:not([width]) { width: 24px; height: 24px; }
.api { font-size: 17px; color: #ccc; }
.ime { width: 24px; margin-right: 6px; font-size: 19px; }
.tray time { padding-left: 13px; }

/* overlays */
.share-strip { position: absolute; top: 0; right: 56px; width: 756px; height: 6px; border: 1px solid #ddd; background: #000; }
.watermark { position: absolute; top: 32px; right: 0; display: flex; gap: 14px; opacity: .74; color: #fff; }
.watermark span { padding-top: 12px; font-size: 38px; line-height: 48px; font-weight: 500; }
.tv { position: absolute; right: 42px; bottom: 133px; filter: drop-shadow(0 1px 2px #999); }
.ime-bar { position: absolute; right: 9px; bottom: 43px; display: flex; align-items: center; justify-content: space-between; width: 216px; height: 31px; padding: 0 6px 0 4px; border: 1px solid #a9c4d4; background: linear-gradient(90deg, #fff, #e4f2fa, #fff); color: #3f87cc; }
.ime-bar svg { width: 26px; height: 26px; }
.ime-bar b { font-size: 22px; }
```
